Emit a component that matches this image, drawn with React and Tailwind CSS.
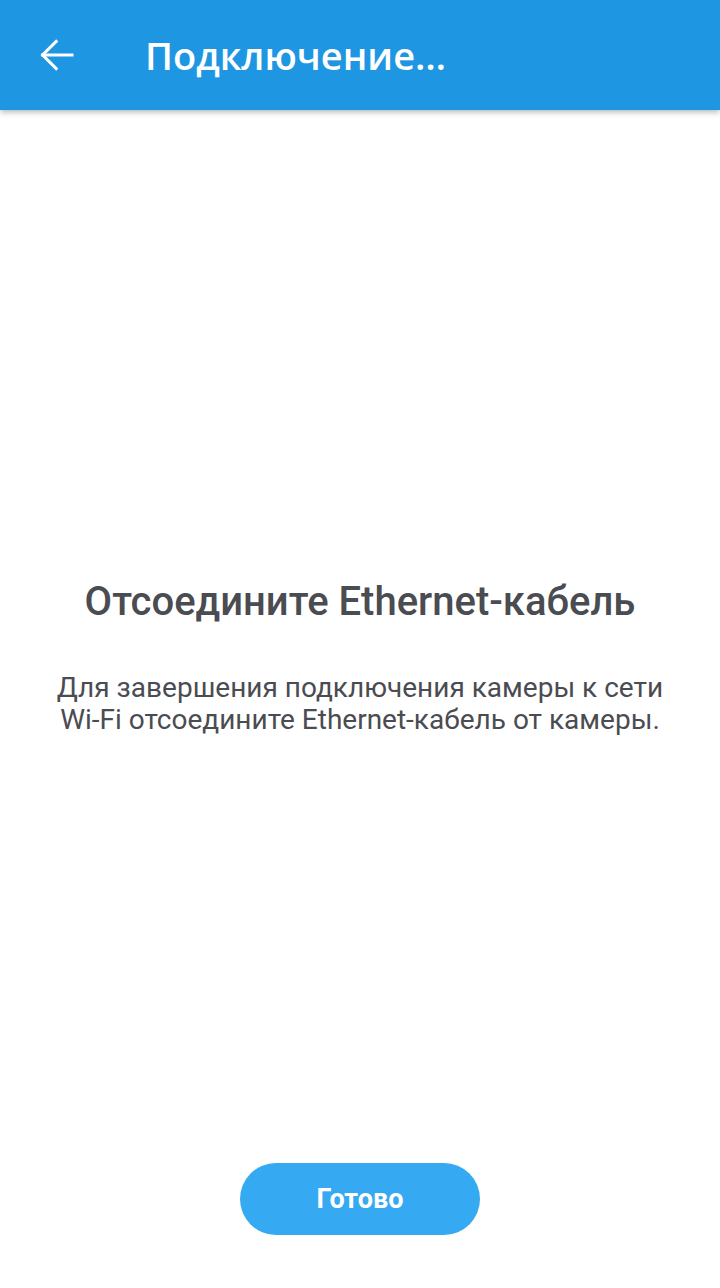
export default function App() {
  return (
    <div className="flex h-[1288px] w-[720px] flex-col bg-white font-['Roboto',sans-serif]">
      <header className="relative z-10 flex h-[110px] shrink-0 items-center bg-[#1e96e2] shadow-[0_2px_6px_rgba(0,0,0,0.3)]">
        <button className="ml-[27px] flex h-[60px] w-[60px] items-center justify-center text-white">
          <svg width="48" height="48" viewBox="0 0 24 24" fill="none" stroke="currentColor" strokeWidth="1.5" strokeLinecap="square">
            <path d="M19.5 12H4.8" />
            <path d="M11.6 5.2L4.8 12l6.8 6.8" />
          </svg>
        </button>
        <h1 className="ml-[58px] font-['Open_Sans',sans-serif] text-[38px] font-semibold text-white">
          Подключение…
        </h1>
      </header>

      <main className="flex flex-1 flex-col items-center px-[20px] pt-[468px] text-center text-[#4a4c51]">
        <h2 className="text-[40px] font-medium leading-[48px]">Отсоедините Ethernet-кабель</h2>
        <p className="mt-[46px] text-[28px] leading-[32px]">
          Для завершения подключения камеры к сети
          <br />
          Wi-Fi отсоедините Ethernet-кабель от камеры.
        </p>
      </main>

      <footer className="flex justify-center pb-[53px]">
        <button className="h-[72px] w-[240px] rounded-full bg-[#35a9f2] text-[27px] font-bold text-white">
          Готово
        </button>
      </footer>
    </div>
  );
}
